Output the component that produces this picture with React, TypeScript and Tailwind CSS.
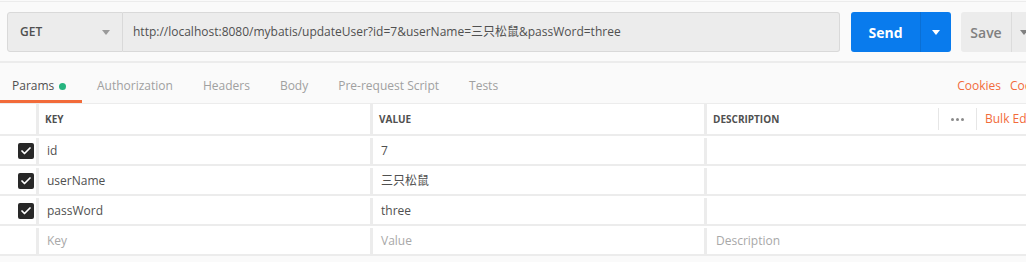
import { Check } from 'lucide-react'

const rows = [
  { key: 'id', value: '7' },
  { key: 'userName', value: '三只松鼠' },
  { key: 'passWord', value: 'three' },
]

function Caret({ className }: { className: string }) {
  return (
    <svg width="8" height="5" viewBox="0 0 8 5" className={className}>
      <path d="M0 0h8L4 5z" fill="currentColor" />
    </svg>
  )
}

export default function App() {
  const tabs = ['Authorization', 'Headers', 'Body', 'Pre-request Script', 'Tests']
  return (
    <div
      className="w-full h-[262px] overflow-hidden bg-[#fafafa] text-[#505050]"
      style={{ fontFamily: '"Open Sans", "Noto Sans CJK SC", sans-serif' }}
    >
      <div className="w-[1060px]">
        {/* top rule */}
        <div className="h-[1px]" />
        <div className="h-[1px] bg-[#ececec]" />

        {/* request bar */}
        <div className="flex items-stretch h-[40px] mt-[10px] pl-[7px]">
          <div className="w-[116px] flex items-center justify-between pl-[12px] pr-[12px] bg-[#ececec] border border-[#d9d9d9] rounded-l-[3px]">
            <span className="text-[12px] font-semibold text-[#505050]">GET</span>
            <Caret className="text-[#9a9a9a]" />
          </div>
          <div className="w-[717px] flex items-center pl-[10px] bg-[#ececec] border border-l-0 border-[#d9d9d9] rounded-r-[3px] text-[12px] text-[#505050]">
            http://localhost:8080/mybatis/updateUser?id=7&amp;userName=三只松鼠&amp;passWord=three
          </div>
          <div className="ml-[11px] w-[100px] flex bg-[#097bed] rounded-[3px] text-white">
            <div className="w-[69px] flex items-center justify-center text-[14px] font-bold">Send</div>
            <div className="w-[1px] bg-[#0a6fd4]" />
            <div className="flex-1 flex items-center justify-center">
              <Caret className="text-white" />
            </div>
          </div>
          <div className="ml-[10px] w-[90px] flex bg-[#ececec] rounded-[3px] text-[#808080]">
            <div className="w-[50px] flex items-center justify-center text-[14px] font-semibold">Save</div>
            <div className="w-[1px] bg-[#dcdcdc]" />
            <div className="pl-[8px] flex items-center">
              <Caret className="text-[#808080]" />
            </div>
          </div>
        </div>

        {/* divider */}
        <div className="mt-[9px] h-[2px] bg-[#ececec]" />

        {/* tabs */}
        <div className="h-[40px] flex items-stretch">
          <div className="w-[82px] flex flex-col">
            <div className="flex-1 flex items-center pl-[12px] pt-[9px] gap-[5px] text-[12px] text-[#505050]">
              Params
              <span className="w-[7px] h-[7px] rounded-full bg-[#26b47f]" />
            </div>
            <div className="h-[3px] bg-[#f26b3a]" />
          </div>
          <div className="flex items-center pt-[9px] pb-[3px] text-[12px] text-[#a0a0a0]">
            {tabs.map((t, i) => (
              <span key={t} className={i === 0 ? 'ml-[15px]' : 'ml-[30px]'}>
                {t}
              </span>
            ))}
          </div>
          <div className="ml-auto flex items-center pt-[9px] pb-[3px] gap-[9px] text-[12px] text-[#f26b3a] mr-[2px]">
            <span>Cookies</span>
            <span className="w-[48px]">Code</span>
          </div>
        </div>

        {/* table */}
        <div className="border-t border-[#ececec] bg-white text-[12px]">
          <div className="grid grid-cols-[39px_334px_334px_1fr] h-[32px] border-b-2 border-[#ececec]">
            <div className="border-r-[3px] border-[#ececec]" />
            <div className="border-r-[3px] border-[#ececec] flex items-center pl-[6px] text-[10px] font-bold text-[#505050]">
              KEY
            </div>
            <div className="border-r-[3px] border-[#ececec] flex items-center pl-[6px] text-[10px] font-bold text-[#505050]">
              VALUE
            </div>
            <div className="flex items-center">
              <span className="pl-[6px] w-[231px] text-[10px] font-bold text-[#505050]">DESCRIPTION</span>
              <span className="h-[22px] w-[1px] bg-[#e6e6e6]" />
              <span className="w-[37px] flex items-center justify-center gap-[2px]">
                <i className="w-[3px] h-[3px] rounded-full bg-[#8a8a8a]" />
                <i className="w-[3px] h-[3px] rounded-full bg-[#8a8a8a]" />
                <i className="w-[3px] h-[3px] rounded-full bg-[#8a8a8a]" />
              </span>
              <span className="h-[22px] w-[1px] bg-[#e6e6e6]" />
              <span className="pl-[8px] text-[12px] text-[#f26b3a]">Bulk Edit</span>
            </div>
          </div>
          {rows.map(r => (
            <div key={r.key} className="grid grid-cols-[39px_334px_334px_1fr] h-[30px] pt-[2px] border-b-2 border-[#ececec]">
              <div className="border-r-[3px] border-[#ececec] flex items-center justify-end pr-[2px]">
                <span className="w-[16px] h-[16px] rounded-[2px] bg-[#282828] flex items-center justify-center">
                  <Check size={12} strokeWidth={3.5} color="#fff" />
                </span>
              </div>
              <div className="border-r-[3px] border-[#ececec] flex items-center pl-[8px] text-[#505050]">{r.key}</div>
              <div className="border-r-[3px] border-[#ececec] flex items-center pl-[8px] text-[#505050]">{r.value}</div>
              <div />
            </div>
          ))}
          <div className="grid grid-cols-[39px_334px_334px_1fr] h-[30px] pt-[2px] border-b-2 border-[#ececec] text-[#a8a8a8]">
            <div className="border-r-[3px] border-[#ececec]" />
            <div className="border-r-[3px] border-[#ececec] flex items-center pl-[8px]">Key</div>
            <div className="border-r-[3px] border-[#ececec] flex items-center pl-[8px]">Value</div>
            <div className="flex items-center pl-[9px]">Description</div>
          </div>
        </div>
      </div>
    </div>
  )
}
